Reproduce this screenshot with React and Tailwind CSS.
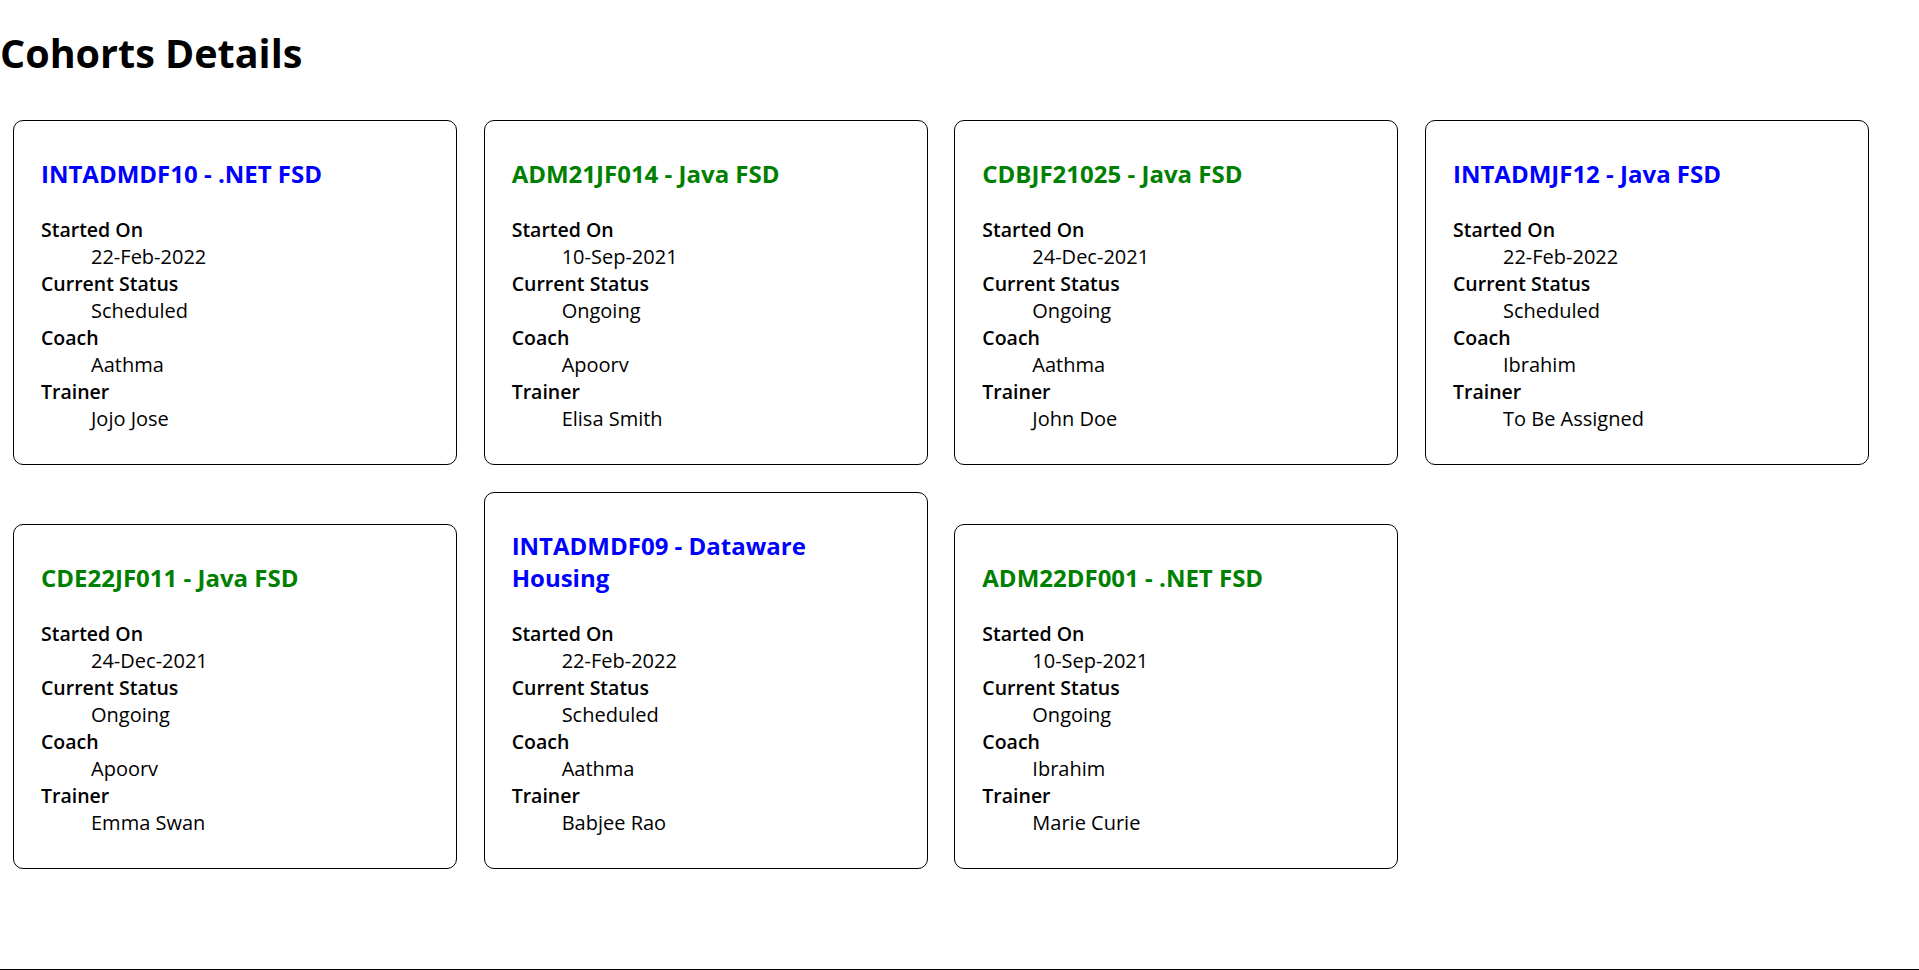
import React from "react";

const cohorts = [
    { code: "INTADMDF10", course: ".NET FSD", startedOn: "22-Feb-2022", status: "Scheduled", coach: "Aathma", trainer: "Jojo Jose" },
    { code: "ADM21JF014", course: "Java FSD", startedOn: "10-Sep-2021", status: "Ongoing", coach: "Apoorv", trainer: "Elisa Smith" },
    { code: "CDBJF21025", course: "Java FSD", startedOn: "24-Dec-2021", status: "Ongoing", coach: "Aathma", trainer: "John Doe" },
    { code: "INTADMJF12", course: "Java FSD", startedOn: "22-Feb-2022", status: "Scheduled", coach: "Ibrahim", trainer: "To Be Assigned" },
    { code: "CDE22JF011", course: "Java FSD", startedOn: "24-Dec-2021", status: "Ongoing", coach: "Apoorv", trainer: "Emma Swan" },
    { code: "INTADMDF09", course: "Dataware Housing", startedOn: "22-Feb-2022", status: "Scheduled", coach: "Aathma", trainer: "Babjee Rao" },
    { code: "ADM22DF001", course: ".NET FSD", startedOn: "10-Sep-2021", status: "Ongoing", coach: "Ibrahim", trainer: "Marie Curie" },
];

const CohortCard = ({ cohort }) => {
    const rows = [
        ["Started On", cohort.startedOn],
        ["Current Status", cohort.status],
        ["Coach", cohort.coach],
        ["Trainer", cohort.trainer],
    ];
    // scheduled cohorts are shown in blue, ongoing ones in green
    const titleColor = cohort.status === "Scheduled" ? "text-[#0000ff]" : "text-[#008000]";

    return (
        <div className="w-[444px] border border-black rounded-[10px] px-[27px] pt-[37px] pb-[32px]">
            <h3 className={`${titleColor} text-[24px] font-bold leading-[32px]`}>
                {cohort.code} - {cohort.course}
            </h3>
            <dl className="mt-[26px] text-[20px] leading-[27px]">
                {rows.map(([label, value]) => (
                    <React.Fragment key={label}>
                        <dt className="font-semibold text-[19.5px]">{label}</dt>
                        <dd className="ml-[50px]">{value}</dd>
                    </React.Fragment>
                ))}
            </dl>
        </div>
    );
};

const App = () => {
    return (
        <div className="min-h-screen border-b border-black bg-white text-black font-['Open_Sans',sans-serif]">
            <h1 className="pt-[27px] text-[39.5px] font-bold leading-[53px]">Cohorts Details</h1>
            <div className="mt-[40px] pl-[13px] flex flex-wrap items-end gap-x-[26.67px] gap-y-[27px]">
                {cohorts.map((cohort) => (
                    <CohortCard key={cohort.code} cohort={cohort} />
                ))}
            </div>
        </div>
    );
};

export default App;
